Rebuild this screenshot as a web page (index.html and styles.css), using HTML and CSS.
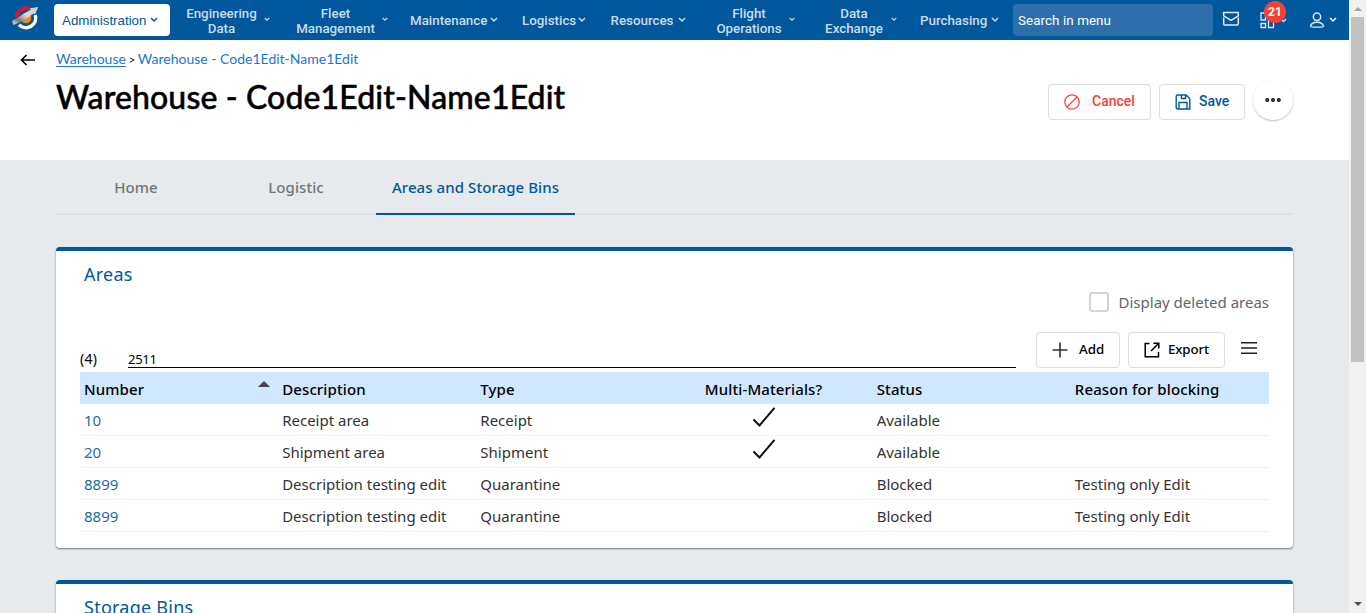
FILE: index.html
```html
<!DOCTYPE html>
<html lang="en">
<head>
<meta charset="utf-8">
<title>Warehouse - Code1Edit-Name1Edit</title>
<link rel="stylesheet" href="styles.css">
</head>
<body>
<svg class="defs" width="0" height="0">
  <symbol id="chev" viewBox="0 0 8 6"><path d="M1 1l3 3 3-3" fill="none" stroke="currentColor" stroke-width="1.5"/></symbol>
  <symbol id="check" viewBox="0 0 24 22"><path d="M1.500 12.500l6 6L22.500 0.800" fill="none" stroke="#111" stroke-width="2"/></symbol>
</svg>
<div class="app">
  <div class="page">
    <nav class="topbar">
      <svg class="logo" viewBox="0 0 28 26">
        <defs><linearGradient id="metal" x1="0" y1="1" x2="1" y2="0"><stop offset="0" stop-color="#eee"/><stop offset=".25" stop-color="#777"/><stop offset=".55" stop-color="#ddd"/><stop offset="1" stop-color="#ccc"/></linearGradient></defs>
        <path d="M5.500 12A9.600 9.600 0 0 1 20 4.600" fill="none" stroke="#e8112d" stroke-width="3.600"/>
        <circle cx="15" cy="13" r="5.300" fill="#ff8200"/>
        <path d="M24.300 10A9.800 9.800 0 0 1 8 19.800" fill="none" stroke="#fff" stroke-width="3.400"/>
        <path d="M1 16L20 4.500l-1-1.300L27.300 2 24 9.500l-1.200-1.300L13 15.500 2.500 20z" fill="url(#metal)"/>
      </svg>
      <a class="current"><span>Administration</span><svg class="chev"><use href="#chev"/></svg></a>
      <div class="menu">
        <a class="item two"><span class="w-eng">Engineering Data</span><svg class="chev"><use href="#chev"/></svg></a>
        <a class="item two"><span class="w-fleet">Fleet Management</span><svg class="chev"><use href="#chev"/></svg></a>
        <a class="item"><span class="w-maint">Maintenance</span><svg class="chev"><use href="#chev"/></svg></a>
        <a class="item"><span class="w-log">Logistics</span><svg class="chev"><use href="#chev"/></svg></a>
        <a class="item"><span class="w-res">Resources</span><svg class="chev"><use href="#chev"/></svg></a>
        <a class="item two"><span class="w-flight">Flight Operations</span><svg class="chev"><use href="#chev"/></svg></a>
        <a class="item two"><span class="w-data">Data Exchange</span><svg class="chev"><use href="#chev"/></svg></a>
        <a class="item"><span class="w-pur">Purchasing</span><svg class="chev"><use href="#chev"/></svg></a>
      </div>
      <div class="search">Search in menu</div>
      <svg class="mail" viewBox="0 0 18 16"><path d="M1.700 1.500h14.600v3.300L9 9.300 1.700 4.800zM1.700 6.500v6.300q0 1.200 1.200 1.200h12.200q1.200 0 1.200-1.200V6.500" fill="none" stroke="#e3edf5" stroke-width="1.500"/></svg>
      <div class="apps">
        <svg width="28" height="17" viewBox="0 0 28 17"><path d="M1 1h4.500v7H1zM1 11.500h4.500v4H1zM8.500 1h5v4h-5zM8.500 8h5v7.500h-5zM21 7l2.500 2.500L26 7" fill="none" stroke="#dce8f3" stroke-width="1.300"/></svg>
        <span class="badge">21</span>
      </div>
      <div class="user">
        <svg width="16" height="17" viewBox="0 0 16 17"><path d="M4.300 4.800a3.700 3.700 0 1 0 7.400 0a3.700 3.700 0 1 0-7.400 0M1.500 14.500c.5-3 3-4.200 6.500-4.200s6 1.200 6.500 4.200c0 .7-13 .7-13 0z" fill="none" stroke="#dce8f3" stroke-width="1.500"/></svg>
        <svg class="chev"><use href="#chev"/></svg>
      </div>
    </nav>

    <header class="head">
      <svg class="back" viewBox="0 0 16 12"><path d="M15 6H1.500M6.500 1l-5 5 5 5" fill="none" stroke="#000" stroke-width="1.600"/></svg>
      <div class="heading">
        <div class="crumbs"><a class="link">Warehouse</a> <span class="sep">&gt;</span> <a class="here">Warehouse - Code1Edit-Name1Edit</a></div>
        <h1>Warehouse - Code1Edit-Name1Edit</h1>
      </div>
      <div class="actions">
        <button class="btn cancel"><svg width="16" height="16" viewBox="0 0 16 16"><path d="M.8 8a7.200 7.200 0 1 0 14.400 0A7.200 7.200 0 1 0 .8 8M13 3L3 13" fill="none" stroke="currentColor" stroke-width="1.300"/></svg><span>Cancel</span></button>
        <button class="btn save"><svg width="16" height="16" viewBox="0 0 16 16"><path d="M1.200 2.500q0-1.500 1.500-1.500H11l3.800 3.800V15H2.700q-1.500 0-1.500-1.500zM4 15V8.500h8V15M6.500 1v3.500h4V1" fill="none" stroke="currentColor" stroke-width="1.400"/></svg><span>Save</span></button>
        <button class="more"><svg width="16" height="6" viewBox="0 0 16 6"><g fill="#777" stroke="#111" stroke-width="1.200"><circle cx="2.200" cy="3" r="1.400"/><circle cx="8" cy="3" r="1.400"/><circle cx="13.800" cy="3" r="1.400"/></g></svg></button>
      </div>
    </header>

    <main class="content">
      <div class="tabs"><a class="tab home">Home</a><a class="tab log">Logistic</a><a class="tab active">Areas and Storage Bins</a></div>

      <section class="card areas">
        <h2>Areas</h2>
        <label class="deleted"><span class="box"></span><span class="deleted-text">Display deleted areas</span></label>
        <div class="tools">
          <span class="count">(4)</span>
          <div class="filter">2511</div>
          <button class="btn add"><svg width="16" height="16" viewBox="0 0 16 16"><path d="M.5 8h15M8 .5v15" stroke="#333" stroke-width="1.600"/></svg><span>Add</span></button>
          <button class="btn export"><svg width="16" height="16" viewBox="0 0 16 16"><path d="M5.500 1.500H1.200v13.300h13.300V10M9.500 1.200h5.300v5.300M14.500 1.500L7 9" fill="none" stroke="#000" stroke-width="1.500"/></svg><span>Export</span></button>
          <svg class="burger" width="16" height="12" viewBox="0 0 16 12"><path d="M0 .8h16M0 6h16M0 11.200h16" stroke="#222" stroke-width="1.500"/></svg>
        </div>
        <div class="table">
          <div class="row th"><span class="sorted">Number<i class="sort"></i></span><span>Description</span><span>Type</span><span class="mid">Multi-Materials?</span><span>Status</span><span>Reason for blocking</span></div>
          <div class="row"><a>10</a><span>Receipt area</span><span>Receipt</span><span class="mid"><svg class="check"><use href="#check"/></svg></span><span>Available</span><span></span></div>
          <div class="row"><a>20</a><span>Shipment area</span><span>Shipment</span><span class="mid"><svg class="check"><use href="#check"/></svg></span><span>Available</span><span></span></div>
          <div class="row"><a>8899</a><span>Description testing edit</span><span>Quarantine</span><span></span><span>Blocked</span><span>Testing only Edit</span></div>
          <div class="row"><a>8899</a><span>Description testing edit</span><span>Quarantine</span><span></span><span>Blocked</span><span>Testing only Edit</span></div>
        </div>
      </section>

      <section class="card"><h2>Storage Bins</h2></section>
    </main>
  </div>
  <aside class="scroll"><i class="up"></i><div class="thumb"></div><i class="down"></i></aside>
</div>
</body>
</html>
```
FILE: styles.css
```css
* { box-sizing: border-box; }
body { margin: 0; overflow: hidden; background: #fff; font-family: "Noto Sans", sans-serif; color: #000; }
.defs { position: absolute; }
.app { display: flex; height: 613px; }
.page { width: 1349px; height: 613px; overflow: hidden; display: flex; flex-direction: column; }

.topbar { height: 40px; flex: none; background: #00579c; display: flex; align-items: center; }
.logo { width: 28px; height: 26px; margin: 0 15px 4px 11px; flex: none; }
.chev { width: 8px; height: 6px; flex: none; }
.current { width: 116px; height: 32px; flex: none; background: #fff; border-radius: 4px; color: #00579c; display: flex; align-items: center; padding-left: 8px; font: 13.33px "Liberation Sans", sans-serif; }
.current span { width: 84px; margin-right: 4px; white-space: nowrap; }
.menu { display: grid; grid-template-columns: 110px 114px 112px 88px 106px 108px 96px 93px; margin-left: 16px; color: #c8dcec; font: 500 13.33px/15px Roboto, sans-serif; }
.item { display: flex; align-items: center; gap: 4px; text-align: center; }
.item span { white-space: nowrap; flex: none; }
.item.two span { white-space: normal; padding-top: 1px; }
.item.two { gap: 7px; }
.item.two .chev { width: 6px; height: 5px; margin-top: -1px; }
.w-eng { width: 71px; }
.w-fleet { width: 79px; }
.w-maint { width: 76px; }
.w-log { width: 52px; }
.w-res { width: 64px; }
.w-flight { width: 66px; }
.w-data { width: 60px; }
.w-pur { width: 67px; }
.search { width: 200px; height: 32px; flex: none; border-radius: 4px; background: #2c6fab; color: #fff; font: 13.33px/33px Roboto, sans-serif; padding-left: 5px; letter-spacing: .1px; }
.mail { width: 18px; height: 16px; margin: 0 20px 2px 9px; flex: none; }
.apps { position: relative; width: 50px; height: 17px; flex: none; }
.apps svg { display: block; }
.badge { position: absolute; left: 4px; top: -11px; width: 22px; height: 22px; border-radius: 50%; background: #f44336; color: #fff; font: 700 12px/22px Roboto, sans-serif; text-align: center; }
.user { display: flex; align-items: center; gap: 4px; color: #fff; margin-left: -1px; }

.head { height: 120px; flex: none; display: flex; }
.back { width: 16px; height: 12px; margin: 14px 20px 0; flex: none; }
.heading { width: 992px; padding-top: 10px; font-family: Lato, sans-serif; }
.crumbs { height: 18px; font-size: 14px; line-height: 18px; color: #1976d2; white-space: nowrap; }
.link { text-decoration: underline; text-underline-offset: 2px; }
.sep { color: #222; font-size: 12px; margin: 0 -1px; }
h1 { margin: 7px 0 0; font: 500 32px/44px Lato, sans-serif; white-space: nowrap; letter-spacing: .13px; -webkit-text-stroke: .5px #000; }
.actions { display: flex; align-items: flex-start; padding-top: 44px; gap: 8px; }
.btn { height: 36px; flex: none; border: 1px solid #dedede; border-radius: 4px; background: #fff; padding: 0; display: flex; align-items: center; font: 500 14px Roboto, sans-serif; }
.btn svg { flex: none; }
.cancel { width: 103px; padding-left: 15px; gap: 12px; color: #f44336; }
.save { width: 86px; padding-left: 15px; gap: 8px; color: #00579c; }
.head .btn svg { margin-top: -1px; }
.btn span { margin-top: -2px; }
.more { width: 40px; height: 40px; margin-top: -4px; padding: 0; border: 0; border-radius: 50%; background: #fff; box-shadow: 0 1px 2px rgba(0,0,0,.25); display: flex; align-items: center; justify-content: center; }

.content { flex: 1; background: #e6eaed; padding: 0 56px; overflow: hidden; }
.tabs { height: 55px; border-bottom: 2px solid #dce0e4; display: flex; font-size: 15px; font-weight: 500; letter-spacing: .07px; color: #6f777c; }
.tab { height: 55px; line-height: 55px; text-align: center; white-space: nowrap; }
.home, .log { width: 160px; }
.active { width: 199px; border-bottom: 2px solid #00579c; color: #00579c; }
.card { margin-top: 32px; height: 301px; background: #fff; border-top: 4px solid #00579c; border-radius: 4px; padding: 0 24px; box-shadow: 0 1px 2px rgba(0,0,0,.5); }
h2 { margin: 0; padding: 10px 4px 0; font: 400 18px/26px "Noto Sans", sans-serif; letter-spacing: .25px; height: 36px; color: #00579c; }
.deleted { height: 30px; display: flex; align-items: center; justify-content: flex-end; gap: 10px; color: #60666b; font-size: 15px; margin-bottom: 15px; }
.tools { height: 40px; display: flex; align-items: flex-start; }
.box { width: 20px; height: 20px; border: 2px solid #ced4da; border-radius: 3px; }
.count { width: 48px; font-size: 14px; line-height: 20px; margin-top: 17px; letter-spacing: .3px; }
.filter { width: 888px; height: 20px; margin: 16px 20px 0 0; border-bottom: 1px solid #000; font-size: 13px; line-height: 22px; letter-spacing: -.25px; }
.add, .export { font: 500 13.33px "Noto Sans", sans-serif; }
.add { width: 84px; padding-left: 15px; gap: 11px; margin-right: 8px; }
.export { width: 97px; padding-left: 15px; gap: 8px; }
.content .btn span { margin-top: -3px; }
.export span { letter-spacing: -.15px; }
.burger { margin: 10px 0 0 16px; }
.row { display: grid; grid-template-columns: repeat(6, 1fr); height: 32px; border-bottom: 1px solid #f0f1f2; font-size: 15px; line-height: 33px; color: #333; white-space: nowrap; }
.row > * { padding: 0 4px; }
.row a { color: #1b6aa8; }
.th { background: #cfe8ff; border: 0; font-weight: 500; color: #000; line-height: 35px; letter-spacing: .12px; }
.row .mid { text-align: center; padding-right: 24px; }
.sorted { display: flex; justify-content: space-between; }
.sort { border: 6px solid transparent; border-top: 0; border-bottom: 6px solid #444; height: 0; margin: 9px 4px 0 0; }
.check { display: block; width: 24px; height: 22px; margin: 3px auto 0; }

.scroll { width: 17px; background: #f1f1f1; display: flex; flex-direction: column; align-items: center; height: 613px; }
.up, .down { border: 4px solid transparent; border-top: 0; border-bottom: 4px solid #a3a3a3; margin-top: 7px; }
.thumb { width: 13px; height: 345px; margin-top: 6px; background: #c1c1c1; }
.down { border-bottom: 0; border-top: 4px solid #505050; margin: auto 0 7px; }
```
